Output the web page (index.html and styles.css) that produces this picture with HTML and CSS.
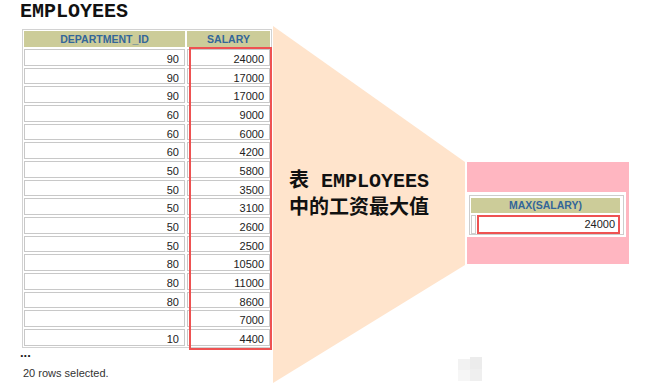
FILE: index.html
```html
<!DOCTYPE html>
<html lang="zh-CN">
<head>
<meta charset="utf-8">
<title>EMPLOYEES MAX(SALARY)</title>
<link rel="stylesheet" href="styles.css">
</head>
<body>
<div class="page">
  <section class="left">
    <h1 class="title">EMPLOYEES</h1>
    <div class="emp">
      <div class="grid">
        <div class="th">DEPARTMENT_ID</div><div class="th">SALARY</div>
        <div class="td">90</div><div class="td">24000</div>
        <div class="td">90</div><div class="td">17000</div>
        <div class="td">90</div><div class="td">17000</div>
        <div class="td">60</div><div class="td">9000</div>
        <div class="td">60</div><div class="td">6000</div>
        <div class="td">60</div><div class="td">4200</div>
        <div class="td">50</div><div class="td">5800</div>
        <div class="td">50</div><div class="td">3500</div>
        <div class="td">50</div><div class="td">3100</div>
        <div class="td">50</div><div class="td">2600</div>
        <div class="td">50</div><div class="td">2500</div>
        <div class="td">80</div><div class="td">10500</div>
        <div class="td">80</div><div class="td">11000</div>
        <div class="td">80</div><div class="td">8600</div>
        <div class="td"></div><div class="td">7000</div>
        <div class="td">10</div><div class="td">4400</div>
      </div>
      <div class="highlight"></div>
    </div>
    <div class="dots">...</div>
    <div class="note">20 rows selected.</div>
  </section>
  <section class="callout">
    <svg class="callout-bg" viewBox="0 0 192 357" preserveAspectRatio="none"><polygon points="0,0 192,136 192,239 0,357" fill="#ffe4cc"/></svg>
    <p class="callout-text"><span class="zh">表</span> EMPLOYEES<br><span class="zh">中的工资最大值</span></p>
  </section>
  <section class="result">
    <div class="res-wrap">
      <div class="res-table">
        <div class="th wide">MAX(SALARY)</div>
        <div class="stub"></div><div class="rv">24000</div>
      </div>
    </div>
  </section>
  <svg class="watermark" width="24" height="24" viewBox="0 0 24 24"><rect x="0" y="2" width="12" height="11" fill="#f2f2f2"/><rect x="12" y="0" width="12" height="12" fill="#ececec"/><rect x="0" y="13" width="12" height="11" fill="#f6f6f6"/><rect x="12" y="12" width="12" height="12" fill="#efefef"/></svg>
</div>
</body>
</html>
```
FILE: styles.css
```css
* { box-sizing: border-box; }
html, body { margin: 0; padding: 0; background: #ffffff; }
body { font-family: "Liberation Sans", Arial, sans-serif; color: #222; }

.page { position: relative; display: flex; align-items: flex-start; width: 658px; height: 391px; overflow: hidden; }

.left { width: 273px; flex-shrink: 0; padding-left: 20px; }
.title { margin: 0; padding-top: 2px; font-family: "Liberation Mono", "Courier New", monospace; font-weight: bold; font-size: 20px; line-height: 20px; color: #111; }

.emp { position: relative; margin: 7px 0 0 2px; width: 250px; border: 1px solid #d2d2d2; padding: 1px; }
.grid { display: grid; grid-template-columns: 161px 83px; grid-template-rows: 16px repeat(16, 16.67px); gap: 2px; }
.th { background: #cccc99; color: #336699; font-weight: bold; font-size: 10.5px; line-height: 16px; text-align: center; }
.td { background: #fff; border: 1px solid #c8c8c8; font-size: 11px; line-height: 12px; padding: 3px 5px 0 0; text-align: right; color: #222; }
.highlight { position: absolute; left: 166px; top: 17px; width: 83px; height: 303px; border: 2px solid #ee5252; }

.dots { font-weight: bold; font-size: 13px; line-height: 10px; color: #222; }
.note { margin: 8px 0 0 3px; font-size: 11px; line-height: 14px; color: #333; }

.callout { position: relative; width: 192px; height: 357px; margin-top: 26px; flex-shrink: 0; }
.callout-bg { position: absolute; left: 0; top: 0; width: 100%; height: 100%; }
.callout-text { position: relative; margin: 0; padding: 140.7px 0 0 16px; font-family: "Liberation Mono", "Noto Sans CJK SC", monospace; font-weight: bold; font-size: 20px; line-height: 24px; color: #111; white-space: nowrap; }
.zh { font-family: "Noto Sans CJK SC", sans-serif; font-weight: bold; }

.result { width: 162px; height: 102px; margin: 162px 0 0 2px; flex-shrink: 0; background: #ffb6c1; padding-top: 30px; }
.res-wrap { width: 159px; background: #fff; padding: 3px 2px 2px 2px; }
.res-table { display: grid; grid-template-columns: 5px 1fr; grid-template-rows: 15px 19px; column-gap: 1px; row-gap: 2px; border: 1px solid #cdcdcd; padding: 2px 3px 0 1px; }
.res-table .th { grid-column: 1 / span 2; line-height: 15px; }
.stub { background: #fff; border: 1px solid #cdcdcd; }
.rv { background: #fff; border: 2px solid #ee5252; font-size: 11px; line-height: 15px; text-align: right; padding-right: 3px; color: #222; }

.watermark { position: absolute; left: 458px; top: 357px; }
```
